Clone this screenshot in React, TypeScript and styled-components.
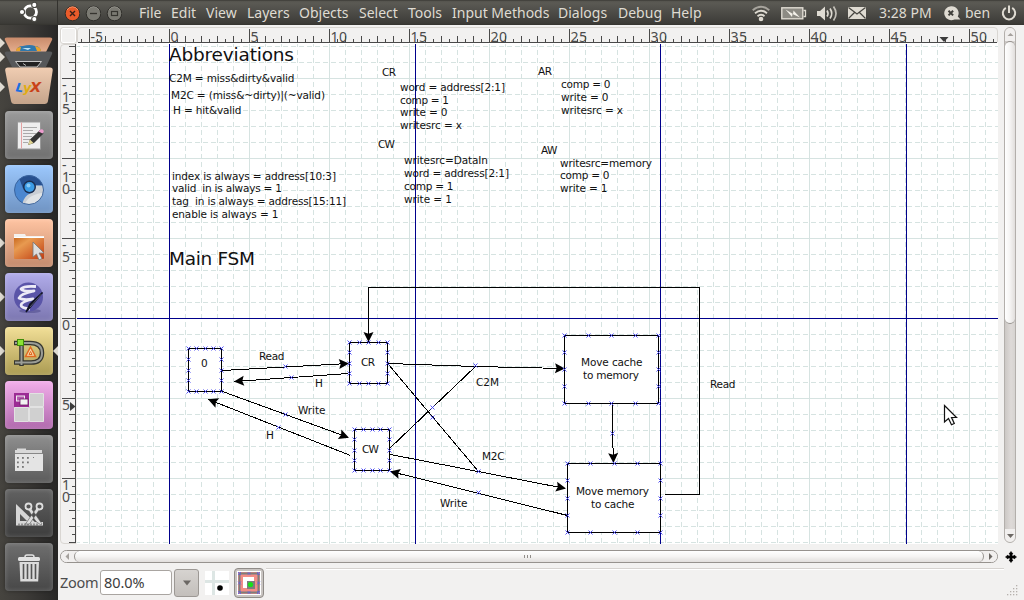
import React from "react";
import styled, { createGlobalStyle } from "styled-components";

const ui = `"Noto Sans", "Open Sans", sans-serif`;
const NAVY = "#00008b";
const GRID = "#d6e3e1";

const Global = createGlobalStyle`
  * { box-sizing: border-box; }
  html, body { margin: 0; padding: 0; overflow: hidden; }
  body { font-family: ${ui}; color: #4c4c4c; background: #f2f1f0; }
  svg { display: block; }
`;

const Screen = styled.div`
  width: 1024px;
  height: 600px;
  display: grid;
  grid-template-rows: 25px 575px;
  overflow: hidden;
`;

/* ---------- top panel ---------- */
const Panel = styled.header`
  display: flex;
  align-items: center;
  height: 25px;
  background: linear-gradient(#33322e 0, #55544e 1px, #5b5a54 3px, #3d3c38 23px, #35342f 25px);
  color: #dfdbd2;
  font-size: 14px;
  line-height: 24px;
`;
const Home = styled.div`
  width: 58px;
  height: 25px;
  display: flex;
  justify-content: center;
  padding: 1px 0 0 0;
  border-right: 1px solid #33322e;
`;
const WindowButtons = styled.div`
  display: flex;
  gap: 5px;
  padding-left: 6px;
  width: 81px;
`;
const Menus = styled.nav`
  display: flex;
  gap: 8px;
  width: 613px;
`;
const MenuItem = styled.span<{ $w: number }>`
  width: ${(p) => p.$w}px;
  white-space: nowrap;
`;
const Tray = styled.div`
  display: flex;
  align-items: center;
  height: 24px;
`;
const TraySlot = styled.span<{ $w: number }>`
  width: ${(p) => p.$w}px;
  white-space: nowrap;
`;

/* ---------- launcher ---------- */
const Body = styled.div`
  display: grid;
  grid-template-columns: 58px 966px;
`;
const Launcher = styled.aside`
  height: 575px;
  padding-top: 12px;
  background: linear-gradient(90deg, #46443f 0, #3d3b38 25px, #2c2b2a 52px, #272625 58px);
  overflow: hidden;
`;
const Dock = styled.div`
  display: flex;
  flex-direction: column;
  gap: 6px;
`;
const TileRow = styled.div`
  height: 48px;
  display: grid;
  grid-template-columns: 5px 48px 5px;
  align-items: center;
`;
const Tile = styled.div<{ $top: string; $bottom: string }>`
  width: 48px;
  height: 48px;
  border-radius: 4px;
  display: flex;
  align-items: center;
  justify-content: center;
  background: linear-gradient(${(p) => p.$top}, ${(p) => p.$bottom});
  box-shadow: inset 0 0 5px rgba(255, 255, 255, 0.22), 0 0 4px rgba(0, 0, 0, 0.35);
`;
const Pip = styled.i<{ $on?: boolean; $left?: boolean }>`
  width: 0;
  height: 0;
  border: 5px solid transparent;
  border-width: 5px 0 5px 5px;
  border-left-color: ${(p) => (p.$on && !p.$left ? "#dfdbd2" : "transparent")};
  ${(p) => p.$left && p.$on && "border-width: 5px 5px 5px 0; border-right-color: #dfdbd2;"}
`;

/* ---------- editor ---------- */
const Editor = styled.main`
  display: grid;
  grid-template-columns: 17px 921px 26px;
  grid-template-rows: 19px 500px 24px 32px;
  padding-left: 2px;
  background: #f2f1f0;
`;
const Corner = styled.div`
  width: 17px;
  height: 17px;
  margin-top: 2px;
  border: 1px solid #d9d6d2;
  border-radius: 3px;
  box-shadow: inset 0 0 0 1px #fff;
`;
const Sheet = styled.div`
  background: #fff;
  overflow: hidden;
`;
const VScroll = styled.div`
  margin: 2px 8px 1px 6px;
  border: 1px solid #b3afab;
  border-radius: 7px;
  display: flex;
  flex-direction: column;
  background: linear-gradient(90deg, #ccc8c5, #dedad8 60%, #d6d3d0);
  overflow: hidden;
  grid-row: 1 / 3;
  grid-column: 3;
`;
const StepButton = styled.div`
  flex: 0 0 13px;
  display: flex;
  align-items: center;
  justify-content: center;
  background: #f1efee;
`;
const VThumb = styled.div`
  height: 283px;
  border: 1px solid #96928e;
  border-width: 1px 0;
  border-radius: 6px;
  background: linear-gradient(90deg, #fff, #f5f4f3 50%, #e1dedc);
`;
const Trough = styled.div`
  flex: 1;
`;
const HScroll = styled.div`
  margin: 6px 0 5px 0;
  height: 13px;
  border: 1px solid #96928e;
  border-radius: 7px;
  display: flex;
  overflow: hidden;
  background: #f1efee;
  grid-column: 1 / 3;
`;
const HThumb = styled.div`
  flex: 1;
  display: flex;
  align-items: center;
  justify-content: center;
  gap: 2px;
  padding-right: 4px;
  border: 1px solid #96928e;
  border-width: 0 1px;
  border-radius: 6px;
  background: linear-gradient(#fff, #f5f4f3 50%, #e1dedc);
`;
const Grip = styled.i`
  width: 1px;
  height: 3px;
  background: #918d89;
`;
const Pan = styled.div`
  padding: 7px 0 0 7px;
`;
const Footer = styled.footer`
  grid-column: 1 / 4;
  display: flex;
  height: 32px;
  font-size: 14.5px;
`;
const ZoomLabel = styled.label`
  width: 40px;
  line-height: 29px;
  letter-spacing: -0.3px;
`;
const Entry = styled.div`
  width: 72px;
  height: 25px;
  margin-top: 2px;
  padding-left: 3px;
  line-height: 23px;
  border: 1px solid #a9a5a1;
  border-radius: 3px;
  background: #fff;
  color: #3c3c3c;
  letter-spacing: -0.05px;
`;
const DropButton = styled.div`
  width: 25px;
  height: 28px;
  margin: 1px 6px 0 2px;
  border: 1px solid #9c9894;
  border-radius: 3px;
  background: linear-gradient(#d6d3d0, #c3bfbb);
  display: flex;
  align-items: center;
  justify-content: center;
`;
const Snap = styled.div`
  width: 24px;
  margin: 3px 5px 0 0;
`;
const Toggle = styled.div`
  width: 30px;
  height: 30px;
  border: 1px solid #8f8b87;
  border-radius: 4px;
  background: #c9c5c2;
  display: flex;
  align-items: center;
  justify-content: center;
`;
const Status = styled.div`
  width: 738px;
  height: 2px;
  margin-left: 2px;
  border-top: 1px solid #d6d3d0;
  border-bottom: 1px solid #fff;
`;
const Resize = styled.div`
  align-self: flex-end;
  margin: 0 0 3px 3px;
`;

/* ---------- data ---------- */
type TextSpec = [string, number, number, number, number?];
const texts: TextSpec[] = [
  ["Abbreviations", 169, 61, 125, 18.5],
  ["C2M = miss&dirty&valid", 169, 82, 125.5],
  ["M2C = (miss&~dirty)|(~valid)", 171, 99, 154],
  ["H = hit&valid", 173, 114, 68.5],
  ["CR", 382, 76, 14],
  ["word = address[2:1]", 400, 91, 105],
  ["comp = 1", 400, 104, 49],
  ["write = 0", 400, 116, 47.5],
  ["writesrc = x", 400, 129, 62],
  ["AR", 538, 75, 14],
  ["comp = 0", 561, 88, 49.5],
  ["write = 0", 561, 101, 47.5],
  ["writesrc = x", 561, 114, 62],
  ["CW", 378, 148, 17],
  ["writesrc=DataIn", 404, 164, 84],
  ["word = address[2:1]", 404, 177, 105],
  ["comp = 1", 404, 190, 49.5],
  ["write = 1", 404, 203, 48],
  ["AW", 541, 154, 16.5],
  ["writesrc=memory", 560, 167, 92],
  ["comp = 0", 560, 179, 49.5],
  ["write = 1", 560, 192, 47.5],
  ["index is always = address[10:3]", 172, 180, 164],
  ["valid  in is always = 1", 172, 192, 110],
  ["tag  in is always = address[15:11]", 172, 205, 174],
  ["enable is always = 1", 172, 218, 106.5],
  ["Main FSM", 169, 265, 86, 18.5],
  ["0", 201, 367, 6.5],
  ["CR", 361, 366, 14],
  ["CW", 362, 453, 17],
  ["Read", 259, 360, 25.5],
  ["H", 315, 387, 8],
  ["Write", 298, 414, 27.5],
  ["H", 266, 439, 8],
  ["C2M", 476, 386, 23],
  ["M2C", 482, 460, 22.5],
  ["Write", 440, 507, 27.5],
  ["Read", 710, 388, 25.5],
  ["Move cache", 581, 366, 61.5],
  ["to memory", 583, 379, 56],
  ["Move memory", 576, 495, 73],
  ["to cache", 591, 508, 43.5],
];

const boxes = [
  [188, 348, 33, 43],
  [349, 342, 38, 41],
  [354, 429, 35, 41],
  [564, 335, 94, 68],
  [567, 463, 93, 69],
];

const links: { pts: number[][]; arrow?: boolean; mid?: number[] }[] = [
  { pts: [[222, 370], [348, 363]], arrow: true, mid: [285, 366] },
  { pts: [[348, 373], [234, 381]], arrow: true, mid: [291, 377] },
  { pts: [[222, 391], [348, 437]], arrow: true, mid: [285, 414] },
  { pts: [[350, 455], [208, 399]], arrow: true, mid: [278, 427] },
  { pts: [[388, 363], [475, 366], [564, 368]], arrow: true, mid: [475, 365] },
  { pts: [[388, 364], [478, 471]], mid: [432, 417] },
  { pts: [[389, 448], [475, 366]], mid: [432, 407] },
  { pts: [[390, 454], [565, 488]], arrow: true, mid: [478, 471] },
  { pts: [[567, 515], [390, 471]], arrow: true, mid: [478, 492] },
  { pts: [[612, 404], [612, 433], [613, 462]], arrow: true, mid: [612, 433] },
  { pts: [[664, 494], [699, 494], [699, 287], [368, 287], [368, 341]], arrow: true },
];

const DiagramText = styled.text`
  font-family: "DejaVu Sans", sans-serif;
  fill: #111;
  white-space: pre;
`;

const arrowHead = (pts: number[][]) => {
  const [x, y] = pts[pts.length - 1];
  const [px, py] = pts[pts.length - 2];
  const a = (Math.atan2(y - py, x - px) * 180) / Math.PI;
  return (
    <path d="M0.5 0L-9.5 -5L-7.8 0L-9.5 5Z" transform={`translate(${x + 0.5} ${y + 0.5}) rotate(${a})`} fill="#000" />
  );
};

const Mark = ({ x, y }: { x: number; y: number }) => (
  <path d={`M${x - 1.5} ${y - 1.5}l4 4m0 -4l-4 4`} stroke="#4646f0" strokeWidth="0.95" fill="none" />
);

const range = (n: number) => Array.from({ length: n }, (_, i) => i);

function Diagram() {
  return (
    <svg width="921" height="500" viewBox="77 44 921 500">
      <g shapeRendering="crispEdges" strokeWidth="1">
        {range(58).map((i) => {
          const x = 89.5 + i * 16;
          return i % 5 === 0 ? (
            <path key={i} d={`M${x} 44V544`} stroke={GRID} />
          ) : (
            <path key={i} d={`M${x} 44V544`} stroke={GRID} strokeDasharray="5 3" strokeDashoffset="2" />
          );
        })}
        {range(32).map((i) => {
          const y = 46.5 + i * 16;
          return i % 5 === 2 ? (
            <path key={i} d={`M77 ${y}H998`} stroke={GRID} />
          ) : (
            <path key={i} d={`M77 ${y}H998`} stroke={GRID} strokeDasharray="5 3" strokeDashoffset="2" />
          );
        })}
        <path d="M169.5 44V544M415.5 44V544M660.5 44V544M906.5 44V544M77 318.5H998" stroke={NAVY} />
      </g>
      <g shapeRendering="crispEdges" stroke="#000" strokeWidth="1">
        {links.map((l, i) => (
          <polyline key={i} fill="none" points={l.pts.map(([x, y]) => `${x + 0.5},${y + 0.5}`).join(" ")} />
        ))}
        {boxes.map(([x, y, w, h], i) => (
          <rect key={i} x={x + 0.5} y={y + 0.5} width={w} height={h} fill="#fff" />
        ))}
      </g>
      {links.filter((l) => l.arrow).map((l, i) => <g key={i}>{arrowHead(l.pts)}</g>)}
      {boxes.map(([x, y, w, h], b) =>
        range(5).map((i) => (
          <g key={`${b}-${i}`}>
            <Mark x={Math.round(x + (w * i) / 4)} y={y} />
            <Mark x={Math.round(x + (w * i) / 4)} y={y + h} />
            {i > 0 && i < 4 && <Mark x={x} y={Math.round(y + (h * i) / 4)} />}
            {i > 0 && i < 4 && <Mark x={x + w} y={Math.round(y + (h * i) / 4)} />}
          </g>
        ))
      )}
      {links.map((l, i) => l.mid && <Mark key={i} x={l.mid[0]} y={l.mid[1]} />)}
      {texts.map(([t, x, y, w, size], i) => (
        <DiagramText key={i} x={x} y={y} fontSize={size ?? 10.5} textLength={w}>
          {t}
        </DiagramText>
      ))}
      <path d="M944.5 405.5v16.5l4-3.5 3 6.2 2.8-1.2-2.8-6h5z" fill="#fff" stroke="#111" strokeWidth="1.2" />
    </svg>
  );
}

const RulerSvg = styled.svg`
  overflow: visible;
`;
const RulerText = styled.text`
  font-family: ${ui};
  font-size: 14px;
  fill: #4c4c4c;
`;

function TopRuler() {
  return (
    <RulerSvg width="921" height="19" viewBox="77 25 921 19">
      <path d="M77.5 42V31q0-3.5 3.5-3.5H994q3.5 0 3.5 3.5V42" fill="#f2f1f0" stroke="#d9d6d2" />
      <rect x="77" y="43" width="921" height="1" fill="#fff" />
      <g shapeRendering="crispEdges" stroke="#4a4a4a">
        <path d="M78 42.5H997" />
        {range(115).map((i) => {
          const x = 81.5 + i * 8;
          const k = i - 1;
          const top = k % 10 === 0 ? 29 : k % 2 === 0 ? 36 : 39;
          return <path key={i} d={`M${x} ${top}V42`} />;
        })}
      </g>
      {range(12).map((i) => (
        <RulerText key={i} x={90.5 + i * 80} y="42" textLength={i === 0 ? 12.5 : i < 3 ? 8 : 16.5}>
          {(i - 1) * 5}
        </RulerText>
      ))}
      <path d="M939.5 37h9l-4.5 5z" fill="#3c3c3c" />
    </RulerSvg>
  );
}

function SideRuler() {
  const labels: [string, number][] = [["-15", 78], ["-10", 158], ["-5", 238], ["0", 318], ["5", 398], ["10", 478]];
  return (
    <RulerSvg width="17" height="500" viewBox="60 44 17 500">
      <path d="M76 44.5H64q-3.5 0-3.5 3.5V540q0 3.5 3.5 3.5H76" fill="#f2f1f0" stroke="#d9d6d2" />
      <g shapeRendering="crispEdges" stroke="#4a4a4a">
        <path d="M75.5 44V543" />
        {range(63).map((i) => {
          const y = 46.5 + i * 8;
          const left = i % 10 === 4 ? 62 : i % 2 === 0 ? 69 : 72;
          return <path key={i} d={`M${left} ${y}H75`} />;
        })}
      </g>
      {labels.map(([l, y]) =>
        l.split("").map((c, i) => (
          <RulerText key={`${y}${i}`} x="62" y={y + 12 + i * 12}>
            {c}
          </RulerText>
        ))
      )}
      <path d="M70 402l5.5 4.5-5.5 4.5z" fill="#3c3c3c" />
    </RulerSvg>
  );
}

const WinButton = ({ kind }: { kind: "close" | "min" | "max" }) => (
  <svg width="16" height="24" viewBox="0 0 16 24">
    <circle cx="8.5" cy="12.5" r="7.3" fill={kind === "close" ? "#ea5b2a" : "#7b7a73"} stroke="#2f2e2a" />
    <path d="M3 9a6.3 6.3 0 0 1 11 0" stroke={kind === "close" ? "#f7946b" : "#92918a"} fill="none" />
    {kind === "close" && <path d="M6 10l5 5m0-5l-5 5" stroke="#3b2018" strokeWidth="1.4" />}
    {kind === "min" && <path d="M5 12.5h7" stroke="#35342f" strokeWidth="1.3" />}
    {kind === "max" && <rect x="5.5" y="10.5" width="6" height="4" fill="none" stroke="#35342f" strokeWidth="1.2" />}
  </svg>
);

const UbuntuLogo = () => (
  <svg width="22" height="22" viewBox="0 0 22 22">
    <circle cx="12.3" cy="11" r="6.2" fill="none" stroke="#fff" strokeWidth="2.8" />
    <g stroke="#4a4944" strokeWidth="1.1" fill="#fff">
      <circle cx="4" cy="11" r="2.6" />
      <circle cx="16.3" cy="3.9" r="2.6" />
      <circle cx="16.3" cy="18.1" r="2.6" />
    </g>
  </svg>
);

const FoldedTiles = () => (
  <svg width="58" height="74" viewBox="0 37 58 74">
    <defs>
      <linearGradient id="peach" x2="0" y2="1"><stop stopColor="#c98b6b" /><stop offset="1" stopColor="#e5ae8e" /></linearGradient>
      <linearGradient id="lyx" x2="0" y2="1"><stop stopColor="#f0cdb2" /><stop offset="1" stopColor="#c5a48b" /></linearGradient>
    </defs>
    <path d="M0 38l5 5-5 5zM0 52l5 5-5 5zM0 82l5 5-5 5z" fill="#dfdbd2" />
    <path d="M7 37.500H50q3 0 2 2.500L46 52H11L5 40q-1-2.500 2-2.500z" fill="url(#peach)" />
    <path d="M16 51q1-5 7-5 7-2 12 0 5 0 6 5z" fill="#2f78ad" />
    <path d="M16 51q0-4 5-4l-1 4zM35 46q6 1 6 5h-4z" fill="#e9a32c" />
    <path d="M22 48h9l-3 2z" fill="#bfe2f2" />
    <path d="M7 51.500H50q3 0 2 2.500L46 67H12L5 54q-1-2.500 2-2.500z" fill="#56585a" />
    <path d="M15.500 61.500h26L37 67H20z" fill="#222" stroke="#c9c9c9" />
    <path d="M23 63.500l3 2" stroke="#bbb" />
    <path d="M8 67.500H50q3 0 2.700 3L48 101q-.5 3-3.500 3H14.500q-3 0-3.500-3L5.200 70.500q-.3-3 2.800-3z" fill="url(#lyx)" />
    <g fontFamily="DejaVu Sans" fontWeight="700" fontStyle="oblique">
      <text x="15.500" y="92" fontSize="12" fill="#1b6fe0" transform="rotate(8 20 90)">L</text>
      <text x="23" y="92" fontSize="13" fill="#e0ac12">y</text>
      <text x="30" y="92" fontSize="14.500" fill="#c9421a">X</text>
    </g>
  </svg>
);

const icons: Record<string, React.ReactNode> = {
  edit: (
    <svg width="48" height="48">
      <rect x="12.5" y="11" width="23" height="27" fill="#eee" stroke="#999" />
      <path d="M16.5 11.5v26" stroke="#e4a2a2" />
      <path d="M18 16.500h14M18 19.500h10M18 22.500h13M18 25.500h9M18 28.500h7M18 31.500h5" stroke="#aaa" />
      <path d="M23 34l2-5.500 10-9.500 3.500 3.500-9.500 9.500z" fill="#333" />
      <path d="M23 34l2-5.500 3.500 3.500z" fill="#dfd391" />
      <path d="M33.500 20.500l2-2q2-1 3 1 1 1-1 3z" fill="#ec9ccd" />
    </svg>
  ),
  chromium: (
    <svg width="48" height="48">
      <circle cx="24" cy="25" r="14.500" fill="#4b87d0" />
      <path d="M14.500 14a14.500 14.500 0 0 1 23.500 6.500H25a6 6 0 0 0-7 3z" fill="#27508f" />
      <path d="M30 20.500h8A14.500 14.500 0 0 1 17.500 38q2-7 7.500-9.500 6-2 5-8z" fill="#c9ced4" />
      <path d="M20 38.500q3-6 8-8 6-3 9.500-2.500-4 13-17.500 10.500z" fill="#dfe3e6" />
      <circle cx="24.500" cy="22" r="6.500" fill="#1c2f52" />
      <circle cx="24.500" cy="22" r="5" fill="#3b9be6" />
      <circle cx="23.500" cy="20.500" r="2" fill="#8acbf8" />
      <circle cx="24" cy="25" r="14.500" fill="none" stroke="#3b659f" />
    </svg>
  ),
  folder: (
    <svg width="48" height="48">
      <defs><linearGradient id="fo" x2="1" y2="1"><stop stopColor="#c96a21" /><stop offset=".3" stopColor="#e89a50" /><stop offset="1" stopColor="#bf3c12" /></linearGradient></defs>
      <path d="M9 17v-2h11l1 2h18v5H9z" fill="#f4f1ee" />
      <path d="M9 19h30v20q0 1-1 1H10q-1 0-1-1z" fill="url(#fo)" />
      <path d="M9 18.500h30" stroke="#fff" />
      <path d="M28 23v15l3.500-3 2.500 6 3-1.500-3-5.500h5z" fill="#ddd" stroke="#777" strokeWidth=".8" />
    </svg>
  ),
  emacs: (
    <svg width="48" height="48">
      <ellipse cx="25" cy="38" rx="11" ry="2" fill="#6662a0" />
      <circle cx="23.500" cy="24" r="14.500" fill="#5a55a8" />
      <path d="M31 13.500q-12-1-15 2.500 3 3 13 2-14 3-15 7 4 2.500 14 1-12 3-12 6 0 3 9 4" fill="none" stroke="#ecebf7" strokeWidth="2.800" strokeLinejoin="round" />
      <path d="M37.500 19.500L27 32l-6 7 4-8z" fill="#111325" stroke="#111325" strokeWidth="1.400" />
      <path d="M36.500 21L25 34" stroke="#6e7190" strokeWidth=".7" />
    </svg>
  ),
  dia: (
    <svg width="48" height="48">
      <g fill="none" stroke="#34352f" strokeWidth="4.500"><path d="M9 16h16q12 0 12 10t-12 9.500H9M16.500 16v23" /></g>
      <g fill="none" stroke="#9a9c96" strokeWidth="2"><path d="M10 16h15q12 0 12 10t-12 9.500H10M16.500 16v22" /></g>
      <rect x="12.500" y="12.500" width="6" height="6" fill="#8be234" stroke="#3f8d08" />
      <path d="M25.500 20l5 9.500h-10z" fill="#f8d6a5" stroke="#e06a22" strokeWidth="1.500" />
      <path d="M25.500 24.500l1.500 3h-3z" stroke="#e06a22" fill="none" />
    </svg>
  ),
  workspaces: (
    <svg width="48" height="48">
      <rect x="9" y="12" width="30" height="29" fill="#b78ab2" />
      <path d="M24.500 12.500h14v13h-14zM9.500 26.500h14v14h-14zM24.500 26.500h14v14h-14z" fill="#d0d0d0" stroke="#e2e2e2" />
      <rect x="9" y="12" width="15" height="14" fill="#9c2c94" />
      <rect x="11.500" y="15" width="8" height="5" fill="#b55aae" stroke="#eee" />
      <rect x="15" y="18" width="8" height="6" fill="#f2f2f2" stroke="#6d1a66" strokeWidth=".8" />
    </svg>
  ),
  files: (
    <svg width="48" height="48">
      <path d="M10 36V15h2v-1.500h9V15h16v21z" fill="#d9d9d9" />
      <path d="M10 18.500h28" stroke="#888" />
      <path d="M10 19h28v17H10z" fill="#e4e4e4" />
      <g fill="#777">
        {[12, 17, 22].map((x, i) => [22, 26.5, 31].map((y, j) => i + j < 4 && <rect key={`${x}${y}`} x={x} y={y} width="1.8" height="1.8" />))}
        <rect x="28" y="22" width="1" height="1" />
      </g>
    </svg>
  ),
  tools: (
    <svg width="48" height="48">
      <path d="M11 15v21h22z" fill="#d6d6d6" />
      <path d="M15 25v7h7z" fill="#555" />
      <path d="M11 33h27v3.500H11z" fill="#d6d6d6" />
      <path d="M14 36.500v-2m3 2v-2m3 2v-2m3 2v-2m3 2v-2m3 2v-2m3 2v-2" stroke="#555" />
      <path d="M20.500 35l11-16 3 1.500-10 14.500zM37 35L26 19l-3 1.500 8 12 5 3.500z" fill="#dedede" stroke="#555" strokeWidth=".6" />
      <circle cx="23.500" cy="17.500" r="3" fill="none" stroke="#dedede" strokeWidth="1.800" />
      <circle cx="34.500" cy="17.500" r="3" fill="none" stroke="#dedede" strokeWidth="1.800" />
    </svg>
  ),
  trash: (
    <svg width="48" height="48">
      <path d="M20 14q0-2 2-2h5q2 0 2 2" fill="none" stroke="#e2e2e2" strokeWidth="1.500" />
      <rect x="13" y="14" width="22" height="4" rx="1.500" fill="#e2e2e2" />
      <path d="M14.500 19h19.500l-.8 19.500H15.300z" fill="#dcdcdc" />
      <path d="M18.500 21v15M22.500 21v15M26.500 21v15M30.500 21v15" stroke="#555" strokeWidth="1.600" />
    </svg>
  ),
};

const tiles: [string, string, string, boolean?, boolean?][] = [
  ["edit", "#9a9a9a", "#6f6f6f"],
  ["chromium", "#9cc8fd", "#6f93c2"],
  ["folder", "#ffc4a2", "#c38a6c", true],
  ["emacs", "#b1acea", "#7b76b0", true],
  ["dia", "#f2df97", "#ab9b52", true, true],
  ["workspaces", "#f2aeea", "#b069ad"],
  ["files", "#8f8f8f", "#5b5b5b"],
  ["tools", "#626262", "#3d3d3d"],
  ["trash", "#6f6f6f", "#474747"],
];

const menus: [string, number][] = [
  ["File", 24], ["Edit", 27], ["View", 33], ["Layers", 44], ["Objects", 52], ["Select", 41],
  ["Tools", 36], ["Input Methods", 98], ["Dialogs", 52], ["Debug", 45], ["Help", 31],
];

const Arrow = ({ d, c }: { d: string; c: string }) => (
  <svg width="7" height="7" viewBox="0 0 7 7"><path d={d} fill={c} /></svg>
);

export default function App() {
  return (
    <Screen>
      <Global />
      <Panel>
        <Home><UbuntuLogo /></Home>
        <WindowButtons>
          <WinButton kind="close" />
          <WinButton kind="min" />
          <WinButton kind="max" />
        </WindowButtons>
        <Menus>
          {menus.map(([m, w]) => <MenuItem key={m} $w={w}>{m}</MenuItem>)}
        </Menus>
        <Tray>
          <TraySlot $w={29}>
            <svg width="18" height="24" viewBox="0 0 18 24" fill="none" stroke="#dfdbd2" strokeWidth="1.8">
              <path d="M.7 9.200q8.300-7 16.600 0" opacity=".6" /><path d="M3 12.200q6-5 12 0" /><path d="M5.500 15.200q3.500-3 7 0" />
              <circle cx="9" cy="18" r="1.4" fill="#dfdbd2" />
            </svg>
          </TraySlot>
          <TraySlot $w={36}>
            <svg width="26" height="24" viewBox="0 0 26 24">
              <rect x=".8" y="6.800" width="21" height="11" fill="#8d8b84" stroke="#dfdbd2" strokeWidth="1.400" />
              <path d="M22.500 9.500h2v6h-2" fill="none" stroke="#dfdbd2" strokeWidth="1.300" />
              <path d="M4.500 8.500l7.500 4.500.5-3.500 6.500 7-7.500-3.500-.5 3z" fill="#f4f1ea" />
            </svg>
          </TraySlot>
          <TraySlot $w={31}>
            <svg width="21" height="24" viewBox="0 0 21 24" fill="none" stroke="#dfdbd2" strokeWidth="1.700">
              <path d="M0 10h3l5-4.500v14L3 15H0z" fill="#dfdbd2" stroke="none" />
              <path d="M10 9.500q2 3 0 6" /><path d="M13 7.500q3.500 5 0 10" /><path d="M16.500 5.500q5 7 0 14" opacity=".8" />
            </svg>
          </TraySlot>
          <TraySlot $w={31}>
            <svg width="18" height="24" viewBox="0 0 18 24">
              <rect y="6" width="18" height="12" fill="#dfdbd2" />
              <path d="M.5 6.500L9 13l8.500-6.500M.5 17.500L6.500 11.500M17.500 17.500L11.500 11.500" stroke="#45443f" fill="none" strokeWidth="1.200" />
            </svg>
          </TraySlot>
          <TraySlot $w={64}>3:28 PM</TraySlot>
          <TraySlot $w={22}>
            <svg width="18" height="24" viewBox="0 0 18 24">
              <path d="M8 5.200a7 7 0 1 0 3.500 13.200H17.500l-2.700-3A7 7 0 0 0 8 5.200z" fill="#dfdbd2" />
              <path d="M5.500 9.800l4.600 4.600m0-4.600l-4.600 4.600" stroke="#3f3e39" strokeWidth="2" />
            </svg>
          </TraySlot>
          <TraySlot $w={36}>ben</TraySlot>
          <TraySlot $w={16}>
            <svg width="16" height="24" viewBox="0 0 16 24" fill="none" stroke="#dfdbd2" strokeWidth="2">
              <path d="M4.800 6.900a6.200 6.200 0 1 0 6.400 0" /><path d="M8 4.500v7.500" />
            </svg>
          </TraySlot>
        </Tray>
      </Panel>
      <Body>
        <Launcher>
          <FoldedTiles />
          <Dock>
            {tiles.map(([name, top, bottom, left, right]) => (
              <TileRow key={name}>
                <Pip $on={left} />
                <Tile $top={top} $bottom={bottom}>{icons[name]}</Tile>
                <Pip $on={right} $left />
              </TileRow>
            ))}
          </Dock>
        </Launcher>
        <Editor>
          <Corner />
          <TopRuler />
          <VScroll>
            <StepButton><Arrow d="M0.5 5L3.5 2L6.5 5z" c="#a5a19d" /></StepButton>
            <VThumb />
            <Trough />
            <StepButton><Arrow d="M0 2L3.5 6L7 2z" c="#6c6864" /></StepButton>
          </VScroll>
          <SideRuler />
          <Sheet><Diagram /></Sheet>
          <HScroll>
            <StepButton><Arrow d="M5 0L1.5 3.5L5 7z" c="#a5a19d" /></StepButton>
            <HThumb><Grip /><Grip /><Grip /></HThumb>
            <StepButton><Arrow d="M2 0L5.5 3.5L2 7z" c="#6c6864" /></StepButton>
          </HScroll>
          <Pan>
            <svg width="12" height="12" viewBox="0 0 12 12">
              <path d="M6 .5l2 2.500H7v2h2V4L11.500 6 9 8V7H7v2h1L6 11.500 4 9h1V7H3v1L.5 6 3 4v1h2V3H4z" fill="#000" stroke="#000" strokeWidth=".6" />
            </svg>
          </Pan>
          <Footer>
            <ZoomLabel>Zoom</ZoomLabel>
            <Entry>80.0%</Entry>
            <DropButton>
              <svg width="8" height="6"><path d="M0 .5h8L4 5.500z" fill="#6c6864" /></svg>
            </DropButton>
            <Snap>
              <svg width="24" height="24">
                <rect width="24" height="24" fill="#fff" />
                <path d="M8.500 0v24M0 10.500h24" stroke="#dde6e4" strokeWidth="3" />
                <circle cx="15" cy="17" r="2.800" fill="#000" />
              </svg>
            </Snap>
            <Toggle>
              <svg width="24" height="24">
                <rect width="24" height="24" fill="#fff" />
                <rect x="1" y="1" width="22" height="22" fill="#f28c86" />
                <rect x="2.500" y="2.500" width="19" height="19" fill="none" stroke="#7d7d7d" strokeWidth="2" />
                <rect x="6" y="6" width="11" height="11" fill="#fff" />
                <rect x="10" y="10" width="8" height="8" fill="#7d7d7d" />
                <circle cx="13.500" cy="13.500" r="2.600" fill="#18e018" />
                <g stroke="#5c5cf0" strokeWidth=".7">
                  {[2.5, 12, 21.5].map((v) => (
                    <path key={v} d={`M${v - 1.5} 1l3 3m0-3l-3 3M${v - 1.5} 20l3 3m0-3l-3 3M1 ${v - 1.5}l3 3m0-3l-3 3M20 ${v - 1.5}l3 3m0-3l-3 3`} />
                  ))}
                </g>
              </svg>
            </Toggle>
            <Status />
            <Resize>
              <svg width="12" height="12" fill="#b5b1ad">
                {range(4).map((r) => range(r + 1).map((c) => <rect key={`${r}${c}`} x={9 - c * 3} y={r * 3} width="1.3" height="1.3" />))}
              </svg>
            </Resize>
          </Footer>
        </Editor>
      </Body>
    </Screen>
  );
}
